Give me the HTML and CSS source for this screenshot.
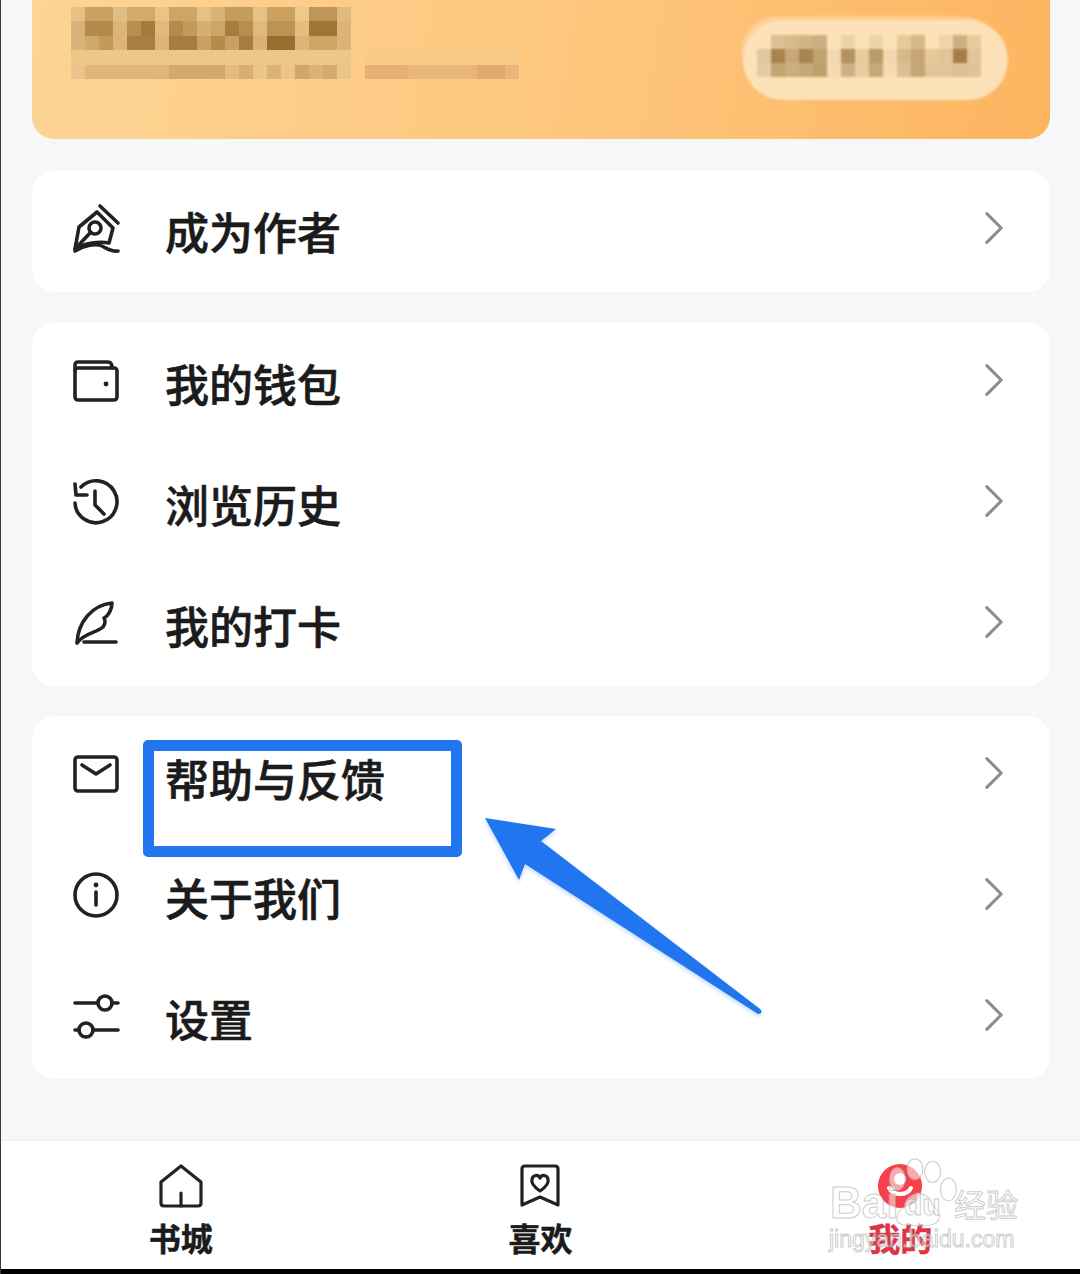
FILE: index.html
```html
<!DOCTYPE html>
<html lang="zh-CN">
<head>
<meta charset="utf-8">
<title>我的</title>
<link rel="stylesheet" href="styles.css">
</head>
<body>
<div class="page">
  <main class="content">
    <header class="vip">
      <svg class="mosaic-left" viewBox="0 0 32 5" preserveAspectRatio="none" shape-rendering="crispEdges">
        <rect x="0" y="0" width="1" height="1" fill="#e6c184"/><rect x="1" y="0" width="2" height="1" fill="#c9a262"/><rect x="3" y="0" width="1" height="1" fill="#e0bd80"/><rect x="4" y="0" width="2" height="1" fill="#d0ab6c"/><rect x="6" y="0" width="1" height="1" fill="#e8c486"/><rect x="7" y="0" width="2" height="1" fill="#cfa566"/><rect x="9" y="0" width="1" height="1" fill="#e6c184"/><rect x="10" y="0" width="1" height="1" fill="#d9b377"/><rect x="11" y="0" width="2" height="1" fill="#c69c5c"/><rect x="13" y="0" width="1" height="1" fill="#e6c184"/><rect x="14" y="0" width="2" height="1" fill="#cca160"/><rect x="16" y="0" width="1" height="1" fill="#f0c98a"/><rect x="17" y="0" width="2" height="1" fill="#bf9558"/><rect x="19" y="0" width="1" height="1" fill="#e0bb7c"/>
        <rect x="0" y="1" width="1" height="1" fill="#d8b377"/><rect x="1" y="1" width="2" height="1" fill="#b58a4c"/><rect x="3" y="1" width="1" height="1" fill="#dcb478"/><rect x="4" y="1" width="1" height="1" fill="#b98f50"/><rect x="5" y="1" width="1" height="1" fill="#a67a3a"/><rect x="6" y="1" width="1" height="1" fill="#e0ba7c"/><rect x="7" y="1" width="1" height="1" fill="#b58a4c"/><rect x="8" y="1" width="1" height="1" fill="#c39a5c"/><rect x="9" y="1" width="1" height="1" fill="#d6ae70"/><rect x="10" y="1" width="1" height="1" fill="#cda564"/><rect x="11" y="1" width="1" height="1" fill="#a87c3e"/><rect x="12" y="1" width="1" height="1" fill="#b88e50"/><rect x="13" y="1" width="1" height="1" fill="#e0ba7c"/><rect x="14" y="1" width="2" height="1" fill="#bd9253"/><rect x="16" y="1" width="1" height="1" fill="#e4bd80"/><rect x="17" y="1" width="2" height="1" fill="#9f7434"/><rect x="19" y="1" width="1" height="1" fill="#dcb478"/>
        <rect x="0" y="2" width="1" height="1" fill="#d8b377"/><rect x="1" y="2" width="1" height="1" fill="#d0a868"/><rect x="2" y="2" width="1" height="1" fill="#c49a5a"/><rect x="3" y="2" width="1" height="1" fill="#dcb478"/><rect x="4" y="2" width="2" height="1" fill="#a87e42"/><rect x="6" y="2" width="1" height="1" fill="#dcb478"/><rect x="7" y="2" width="2" height="1" fill="#a87c3e"/><rect x="9" y="2" width="1" height="1" fill="#c8a062"/><rect x="10" y="2" width="1" height="1" fill="#b58a4c"/><rect x="11" y="2" width="1" height="1" fill="#c8a062"/><rect x="12" y="2" width="1" height="1" fill="#a87c3e"/><rect x="13" y="2" width="1" height="1" fill="#d8b276"/><rect x="14" y="2" width="2" height="1" fill="#9a6e2e"/><rect x="16" y="2" width="1" height="1" fill="#dcb478"/><rect x="17" y="2" width="2" height="1" fill="#cfa566"/><rect x="19" y="2" width="1" height="1" fill="#dcb478"/>
        <rect x="0" y="3" width="20" height="1" fill="#edc68a"/><rect x="21" y="3" width="11" height="1" fill="#f8ca88"/>
        <rect x="0" y="4" width="1" height="1" fill="#eac48a"/><rect x="1" y="4" width="6" height="1" fill="#e0b67c"/><rect x="7" y="4" width="4" height="1" fill="#d4a870"/><rect x="11" y="4" width="1" height="1" fill="#e4bc80"/><rect x="12" y="4" width="1" height="1" fill="#d8ae74"/><rect x="13" y="4" width="1" height="1" fill="#eac48a"/><rect x="14" y="4" width="1" height="1" fill="#dcb278"/><rect x="15" y="4" width="1" height="1" fill="#eac48a"/><rect x="16" y="4" width="1" height="1" fill="#d0a66c"/><rect x="17" y="4" width="1" height="1" fill="#dcb278"/><rect x="18" y="4" width="1" height="1" fill="#d4aa70"/><rect x="19" y="4" width="1" height="1" fill="#eac48a"/>
        <rect x="21" y="4" width="3" height="1" fill="#e4b074"/><rect x="24" y="4" width="5" height="1" fill="#e8b67a"/><rect x="29" y="4" width="2" height="1" fill="#dfaa6c"/><rect x="31" y="4" width="1" height="1" fill="#e8b67a"/>
      </svg>
      <div class="vip-pill">
        <svg class="mosaic-right" viewBox="0 0 16 3" preserveAspectRatio="none" shape-rendering="crispEdges">
          <rect x="1" y="0" width="1" height="1" fill="#dcbf92"/><rect x="2" y="0" width="1" height="1" fill="#d8ba8c"/><rect x="3" y="0" width="1" height="1" fill="#d4b484"/><rect x="4" y="0" width="1" height="1" fill="#cdae7e"/><rect x="6" y="0" width="1" height="1" fill="#eed3a8"/><rect x="8" y="0" width="1" height="1" fill="#eed3a8"/><rect x="10" y="0" width="1" height="1" fill="#e6c89a"/><rect x="11" y="0" width="1" height="1" fill="#d8b888"/><rect x="13" y="0" width="1" height="1" fill="#f0d4a8"/><rect x="14" y="0" width="1" height="1" fill="#d0ae80"/><rect x="15" y="0" width="1" height="1" fill="#e8cc9e"/>
          <rect x="0" y="1" width="1" height="1" fill="#dfc8a2"/><rect x="1" y="1" width="1" height="1" fill="#a9834d"/><rect x="2" y="1" width="1" height="1" fill="#c9a878"/><rect x="3" y="1" width="1" height="1" fill="#a9834d"/><rect x="4" y="1" width="1" height="1" fill="#c2a272"/><rect x="5" y="1" width="1" height="1" fill="#f2d8b0"/><rect x="6" y="1" width="1" height="1" fill="#b29060"/><rect x="7" y="1" width="1" height="1" fill="#e8cc9e"/><rect x="8" y="1" width="1" height="1" fill="#bb9a68"/><rect x="9" y="1" width="1" height="1" fill="#f2d8b0"/><rect x="10" y="1" width="1" height="1" fill="#d8b888"/><rect x="11" y="1" width="1" height="1" fill="#c6a575"/><rect x="12" y="1" width="1" height="1" fill="#e6c89a"/><rect x="13" y="1" width="1" height="1" fill="#e2c596"/><rect x="14" y="1" width="1" height="1" fill="#a37d47"/><rect x="15" y="1" width="1" height="1" fill="#e2c596"/>
          <rect x="0" y="2" width="1" height="1" fill="#e2cca8"/><rect x="1" y="2" width="1" height="1" fill="#c5a473"/><rect x="2" y="2" width="1" height="1" fill="#cdae7e"/><rect x="3" y="2" width="1" height="1" fill="#c9a878"/><rect x="4" y="2" width="1" height="1" fill="#bf9f6e"/><rect x="5" y="2" width="1" height="1" fill="#f5dab2"/><rect x="6" y="2" width="1" height="1" fill="#cdb084"/><rect x="7" y="2" width="1" height="1" fill="#e8cc9e"/><rect x="8" y="2" width="1" height="1" fill="#c8a878"/><rect x="9" y="2" width="1" height="1" fill="#f5dab2"/><rect x="10" y="2" width="1" height="1" fill="#dcbf92"/><rect x="11" y="2" width="1" height="1" fill="#c6a575"/><rect x="12" y="2" width="2" height="1" fill="#e2c596"/><rect x="14" y="2" width="1" height="1" fill="#dcbf92"/><rect x="15" y="2" width="1" height="1" fill="#dfc29a"/>
        </svg>
      </div>
    </header>

    <section class="card card-author">
      <div class="row">
        <svg class="icon" viewBox="0 0 48 52"><path d="M3 46 7 24 25 9 41 25 37 40C28 38 12 40 3 46Z"/><path d="M28 3 46 20"/><circle cx="23" cy="25" r="6"/><path d="M18 30 3 46"/><path d="M3 48C12 42 24 40 30 43 36 46 40 49 46 48"/></svg>
        <span class="label">成为作者</span>
        <svg class="chevron" viewBox="0 0 20 36"><path d="M2 2 18 18 2 34"/></svg>
      </div>
    </section>

    <section class="card card-wallet">
      <div class="row">
        <svg class="icon" viewBox="0 0 48 44"><rect x="3" y="9" width="42" height="32" rx="3"/><path d="M3 12V6Q3 3 6 3H36Q40 3 40 9"/><circle class="dot" cx="34" cy="25" r="2.4"/></svg>
        <span class="label">我的钱包</span>
        <svg class="chevron" viewBox="0 0 20 36"><path d="M2 2 18 18 2 34"/></svg>
      </div>
      <div class="row">
        <svg class="icon" viewBox="0 0 48 48"><path d="M3 25A21 21 0 1 0 9 9"/><path d="M3 6 4 17H15"/><path d="M23 13V27L32 36"/></svg>
        <span class="label">浏览历史</span>
        <svg class="chevron" viewBox="0 0 20 36"><path d="M2 2 18 18 2 34"/></svg>
      </div>
      <div class="row">
        <svg class="icon" viewBox="0 0 48 46"><path d="M5 43C6 22 20 5 40 3 40 10 36 16 32 18 34 21 33 24 31 27 24 33 12 33 5 43Z"/><path d="M12 42H44"/></svg>
        <span class="label">我的打卡</span>
        <svg class="chevron" viewBox="0 0 20 36"><path d="M2 2 18 18 2 34"/></svg>
      </div>
    </section>

    <section class="card card-help">
      <div class="row row-help">
        <svg class="icon" viewBox="0 0 48 40"><rect x="3" y="3" width="42" height="34" rx="3"/><path d="M10 11 24 20 38 11"/></svg>
        <span class="label">帮助与反馈</span>
        <svg class="chevron" viewBox="0 0 20 36"><path d="M2 2 18 18 2 34"/></svg>
      </div>
      <div class="row">
        <svg class="icon" viewBox="0 0 48 48"><circle cx="24" cy="24" r="21"/><circle class="dot" cx="24" cy="14" r="2.4"/><path d="M24 21V34"/></svg>
        <span class="label">关于我们</span>
        <svg class="chevron" viewBox="0 0 20 36"><path d="M2 2 18 18 2 34"/></svg>
      </div>
      <div class="row">
        <svg class="icon" viewBox="0 0 48 44"><path d="M3 9H25M40 9H46"/><circle cx="33" cy="9" r="7"/><path d="M3 36H7M22 36H46"/><circle cx="14" cy="36" r="7"/></svg>
        <span class="label">设置</span>
        <svg class="chevron" viewBox="0 0 20 36"><path d="M2 2 18 18 2 34"/></svg>
      </div>
    </section>
  </main>

  <nav class="tabbar">
    <div class="tab">
      <svg class="tab-icon" viewBox="0 0 44 44"><path d="M2 18 22 2 42 18V39Q42 42 39 42H5Q2 42 2 39Z"/><path d="M22 29V42"/></svg>
      <span class="tab-label">书城</span>
    </div>
    <div class="tab">
      <svg class="tab-icon" viewBox="0 0 44 44"><path d="M4 5Q4 2 7 2H37Q40 2 40 5V41L22 33 4 41Z"/><path d="M22 27C16 23 13 19 14 15 15 11 20 10 22 14 24 10 29 11 30 15 31 19 28 23 22 27Z"/></svg>
      <span class="tab-label">喜欢</span>
    </div>
    <div class="tab tab-active">
      <svg class="tab-icon" viewBox="0 0 44 44"><circle class="tab-disc" cx="22" cy="22" r="22"/><path class="tab-smile" d="M11 24C15 32 29 32 33 24"/><circle class="tab-eye" cx="22" cy="15" r="6"/></svg>
      <span class="tab-label">我的</span>
    </div>
  </nav>
  <div class="home-edge"></div>

  <div class="callout-box"></div>
  <svg class="callout-arrow" viewBox="0 0 300 220"><path d="M5 5 76 16 61 28 280 196Q284 200 278 201L45 51 39 67Z"/></svg>

  <div class="watermark">
    <svg class="paw" viewBox="0 0 100 80">
      <ellipse cx="22" cy="24" rx="9" ry="13"/><ellipse cx="42" cy="13" rx="9" ry="12"/><ellipse cx="62" cy="16" rx="9" ry="12"/><ellipse cx="80" cy="36" rx="9" ry="13"/>
      <path d="M30 56C32 36 58 36 62 54 68 60 74 66 66 74 56 80 40 76 28 76 18 74 20 62 30 56Z"/>
    </svg>
    <span class="wm-bai">Bai</span><span class="wm-du">du</span><span class="wm-cn">经验</span>
    <span class="wm-url">jingyan.baidu.com</span>
  </div>
</div>
</body>
</html>
```

FILE: styles.css
```css
* { box-sizing: border-box; }

html, body { margin: 0; padding: 0; }

body {
  width: 1080px;
  height: 1274px;
  overflow: hidden;
  font-family: "Noto Sans CJK SC", "Noto Sans", sans-serif;
}

.page {
  position: relative;
  width: 1080px;
  height: 1274px;
  display: flex;
  flex-direction: column;
  background: #f6f7f7;
  border-left: 1px solid #3a3a3a;
}

.content {
  flex: 1;
  display: flex;
  flex-direction: column;
  padding: 0 30px 0 31px;
}

.vip {
  height: 139px;
  flex: none;
  display: flex;
  justify-content: space-between;
  align-items: flex-start;
  padding: 7px 42px 0 39px;
  border-radius: 0 0 22px 22px;
  background: linear-gradient(100deg, #fdd494 0%, #fdc67d 55%, #fdb45f 100%);
}

.mosaic-left {
  display: block;
  width: 448px;
  height: 72px;
  filter: blur(0.6px);
}

.vip-pill {
  width: 265px;
  height: 80px;
  margin-top: 13px;
  padding: 15px 0 0 14px;
  border-radius: 40px;
  background: #fde1b8;
  box-shadow: -6px -8px 0 -4px rgba(255, 232, 200, 0.4);
  filter: blur(1.2px);
}

.mosaic-right {
  display: block;
  width: 224px;
  height: 42px;
}

.card {
  flex: none;
  background: #fff;
  border-radius: 22px;
}

.card-author { margin-top: 32px; }
.card-wallet { margin-top: 31px; }
.card-help { margin-top: 30px; }

.row {
  height: 121px;
  display: flex;
  align-items: center;
  padding: 0 47px 0 40px;
}

.icon {
  flex: none;
  width: 48px;
  height: 52px;
  margin-bottom: 5px;
  fill: none;
  stroke: #222;
  stroke-width: 3.6;
  stroke-linecap: round;
  stroke-linejoin: round;
  overflow: visible;
}

.icon .dot {
  fill: #222;
  stroke: none;
}

.label {
  flex: 1;
  margin: -1px 0 0 45px;
  font-size: 44px;
  line-height: 60px;
  font-weight: 500;
  color: #1b1b1b;
  -webkit-text-stroke: 0.6px #1b1b1b;
}

.row-help .label { margin-top: 3px; }

.chevron {
  flex: none;
  width: 18px;
  height: 34px;
  margin-bottom: 8px;
  fill: none;
  stroke: #8c8c8c;
  stroke-width: 3.4;
  stroke-linecap: round;
  stroke-linejoin: round;
}

.tabbar {
  height: 129px;
  flex: none;
  display: grid;
  grid-template-columns: repeat(3, 1fr);
  background: #fff;
  border-top: 1px solid #efefef;
}

.tab {
  display: flex;
  flex-direction: column;
  align-items: center;
  padding-top: 23px;
}

.tab-icon {
  display: block;
  width: 44px;
  height: 44px;
  fill: none;
  stroke: #222;
  stroke-width: 3.2;
  stroke-linecap: round;
  stroke-linejoin: round;
  overflow: visible;
}

.tab-label {
  margin-top: 7px;
  font-size: 32px;
  line-height: 44px;
  font-weight: 700;
  color: #1b1b1b;
  -webkit-text-stroke: 0.5px currentColor;
}

.tab-active .tab-label { color: #dc3546; }

.tab-disc { fill: #f8404c; stroke: none; }
.tab-smile { stroke: #fff; stroke-width: 4; }
.tab-eye { fill: #fff; stroke: none; }

.home-edge {
  height: 5px;
  flex: none;
  background: #000;
}

.callout-box {
  position: absolute;
  left: 142px;
  top: 740px;
  width: 319px;
  height: 117px;
  border: 11px solid #2176f0;
  border-radius: 5px;
}

.callout-arrow {
  position: absolute;
  left: 479px;
  top: 813px;
  width: 300px;
  height: 220px;
  fill: #2176f0;
  filter: drop-shadow(0 2px 2px rgba(33, 118, 240, 0.3));
}

.watermark {
  position: absolute;
  left: 825px;
  top: 1155px;
  width: 200px;
  height: 100px;
  color: rgba(255, 255, 255, 0.5);
  -webkit-text-stroke: 1px rgba(170, 170, 170, 0.6);
  font-family: "Liberation Sans", "Noto Sans CJK SC", sans-serif;
}

.paw {
  position: absolute;
  left: 52px;
  top: 2px;
  width: 88px;
  height: 72px;
  fill: rgba(255, 255, 255, 0.55);
  stroke: rgba(170, 170, 170, 0.6);
  stroke-width: 1.2;
}

.wm-bai, .wm-du, .wm-cn, .wm-url {
  position: absolute;
  white-space: nowrap;
}

.wm-bai {
  left: 4px;
  top: 26px;
  font-size: 44px;
  line-height: 44px;
  font-weight: 700;
}

.wm-du {
  left: 78px;
  top: 33px;
  font-size: 30px;
  line-height: 34px;
  font-weight: 700;
}

.wm-cn {
  left: 128px;
  top: 26px;
  font-size: 32px;
  line-height: 44px;
  font-family: "Noto Sans CJK SC", sans-serif;
}

.wm-url {
  left: 3px;
  top: 68px;
  font-size: 23px;
  line-height: 32px;
}
```
